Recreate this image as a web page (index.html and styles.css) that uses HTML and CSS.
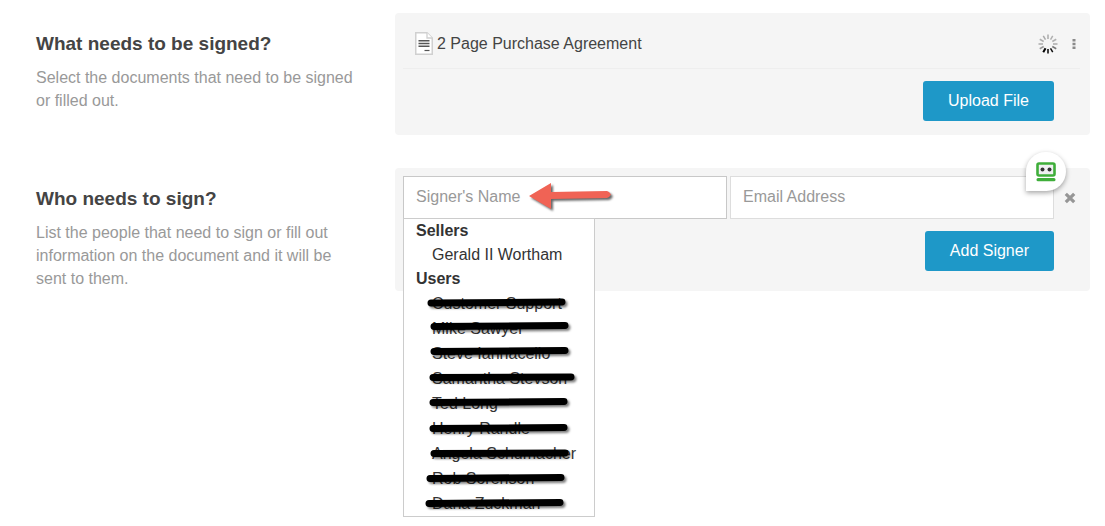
FILE: index.html
```html
<!DOCTYPE html>
<html lang="en">
<head>
    <meta charset="UTF-8">
    <meta name="viewport" content="width=device-width, initial-scale=1.0">
    <title>Request Signatures</title>
    <link rel="stylesheet" href="styles.css">
</head>
<body>
    <form class="signing">
        <section class="step">
            <div class="intro">
                <h2>What needs to be signed?</h2>
                <p>Select the documents that need to be signed or filled out.</p>
            </div>
            <div class="panel">
                <div class="document">
                    <svg class="doc-icon" width="18" height="23" viewBox="0 0 18 23" aria-hidden="true">
                        <path d="M0.75 0.75H12L17.25 6V22.25H0.75Z" fill="#fff" stroke="#d0d0d0" stroke-width="1.5"/>
                        <path d="M12 0.75V6H17.25" fill="#fff" stroke="#d0d0d0" stroke-width="1.3"/>
                        <path d="M3.5 8.8H14.5M3.5 11.5H14.5M3.5 14.2H14.5" stroke="#555" stroke-width="1.4"/>
                        <path d="M9.5 18.5H14.5" stroke="#555" stroke-width="1.2"/>
                    </svg>
                    <span class="doc-name">2 Page Purchase Agreement</span>
                    <svg class="spinner" width="20" height="20" viewBox="-10 -10 20 20" aria-label="Loading">
                        <g stroke-width="1.5">
                            <path d="M0 -5V-9.5" stroke="#aaa"/>
                            <path d="M0 -5V-9.5" stroke="#b0b0b0" transform="rotate(30)"/>
                            <path d="M0 -5V-9.5" stroke="#b0b0b0" transform="rotate(60)"/>
                            <path d="M0 -5V-9.5" stroke="#aaa" transform="rotate(90)"/>
                            <path d="M0 -5V-9.5" stroke="#777" transform="rotate(120)"/>
                            <path d="M0 -5V-9.5" stroke="#111" transform="rotate(150)"/>
                            <path d="M0 -5V-9.5" stroke="#000" transform="rotate(180)"/>
                            <path d="M0 -5V-9.5" stroke="#000" stroke-width="2" transform="rotate(210)"/>
                            <path d="M0 -5V-9.5" stroke="#999" transform="rotate(240)"/>
                            <path d="M0 -5V-9.5" stroke="#aaa" transform="rotate(270)"/>
                            <path d="M0 -5V-9.5" stroke="#b0b0b0" transform="rotate(300)"/>
                            <path d="M0 -5V-9.5" stroke="#aaa" transform="rotate(330)"/>
                        </g>
                    </svg>
                    <button type="button" class="icon-button" aria-label="Document options">
                        <svg width="4" height="12" viewBox="0 0 4 12">
                            <path d="M0.5 1h3v2.4h-3zM0.5 4.8h3v2.4h-3zM0.5 8.6h3V11h-3z" fill="#8a8a8a"/>
                        </svg>
                    </button>
                </div>
                <div class="actions">
                    <button type="button" class="btn">Upload File</button>
                </div>
            </div>
        </section>

        <section class="step">
            <div class="intro">
                <h2>Who needs to sign?</h2>
                <p>List the people that need to sign or fill out information on the document and it will be sent to them.</p>
            </div>
            <div class="panel">
                <div class="signer">
                    <div class="field active">
                        <input type="text" placeholder="Signer's Name" aria-label="Signer's Name">
                        <svg class="arrow" width="90" height="34" viewBox="0 0 90 34" aria-hidden="true">
                            <path d="M3 17L25 4V13L81 12Q83 12 85 15.500Q83 19 81 19L25 20V30Z" fill="#f06355"/>
                        </svg>
                        <div class="suggestions">
                            <h3>Sellers</h3>
                            <ul class="sellers">
                                <li>Gerald II Wortham</li>
                            </ul>
                            <h3>Users</h3>
                            <ul class="users">
                                <li>Customer Support</li>
                                <li>Mike Sawyer</li>
                                <li>Steve Iannacello</li>
                                <li>Samantha Stevson</li>
                                <li>Ted Long</li>
                                <li>Henry Randle</li>
                                <li>Angela Schumacher</li>
                                <li>Rob Sorenson</li>
                                <li>Dana Zuckman</li>
                            </ul>
                            <svg class="marker" width="192" height="300" viewBox="0 0 192 300" aria-hidden="true">
                                <path d="M28 85L159 84M31 108.500L162 107.500M31 133.500L162 132.500M30 159.500L168 159M30 184.500L161 183.500M30 210.500L161 209.500M31 235.500L162 235M27 260.500L158 259.500M26 285.500L157 284.500"/>
                            </svg>
                        </div>
                    </div>
                    <div class="field">
                        <input type="email" placeholder="Email Address" aria-label="Email Address">
                        <button type="button" class="autofill" aria-label="Fill form">
                            <svg width="20" height="20" viewBox="0 0 20 20">
                                <rect x="1.500" y="1.500" width="17" height="12" rx="1.500" fill="#f0f0f2" stroke="#3fae3a" stroke-width="2.600"/>
                                <circle cx="6.500" cy="7.500" r="2" fill="#333"/>
                                <circle cx="13.500" cy="7.500" r="2" fill="#333"/>
                                <rect x="0.500" y="16" width="19" height="3.200" rx="1.500" fill="#3fae3a"/>
                            </svg>
                        </button>
                    </div>
                    <button type="button" class="icon-button remove" aria-label="Remove signer">
                        <svg width="12" height="12" viewBox="0 0 12 12">
                            <path d="M1.800 1.800L10.200 10.200M10.200 1.800L1.800 10.200" stroke="#969696" stroke-width="3.200"/>
                        </svg>
                    </button>
                </div>
                <div class="actions">
                    <button type="button" class="btn">Add Signer</button>
                </div>
            </div>
        </section>
    </form>
</body>
</html>
```

FILE: styles.css
```css
* {
    box-sizing: border-box;
}
body {
    min-height: 100vh;
    margin: 0;
    background-color: #fff;
    color: #444;
    font-family: "Liberation Sans", Arial, sans-serif;
    font-size: 16px;
}
button,
input {
    font: inherit;
}
.signing {
    display: flex;
    flex-direction: column;
    gap: 33px;
    padding: 13px 15px 0 36px;
}
.step {
    display: grid;
    grid-template-columns: 325px 1fr;
    column-gap: 34px;
    align-items: start;
}
.intro {
    padding-top: 19px;
}
.intro h2 {
    margin: 0 0 10px;
    font-size: 19px;
    line-height: 24px;
}
.intro p {
    margin: 0;
    color: #999;
    line-height: 23px;
}
.panel {
    background-color: #f5f5f5;
    border-radius: 4px;
}
.document {
    display: flex;
    align-items: center;
    height: 56px;
    margin: 0 10px 0 8px;
    padding: 6px 0 0 12px;
    border-bottom: 1px solid #eee;
}
.doc-name {
    flex: 1;
    margin-left: 4px;
}
.icon-button {
    display: flex;
    align-items: center;
    justify-content: center;
    width: 32px;
    padding: 0;
    border: none;
    background: none;
    cursor: pointer;
}
.document .icon-button {
    width: 12px;
    margin-left: 10px;
}
.actions {
    display: flex;
    justify-content: flex-end;
    padding: 12px 36px 14px 0;
}
.btn {
    height: 40px;
    padding: 0 25px;
    border: none;
    border-radius: 3px;
    background-color: #1e98c8;
    color: #fff;
    cursor: pointer;
}
.signer {
    display: flex;
    padding: 8px 4px 0 8px;
}
.signer + .actions {
    padding-bottom: 20px;
}
.field {
    position: relative;
    flex: 1;
}
.field + .field {
    margin-left: 3px;
}
.field input {
    display: block;
    width: 100%;
    height: 43px;
    padding: 0 12px 2px;
    border: 1px solid #ddd;
    border-radius: 0;
    background-color: #fff;
}
.field.active input {
    border-color: #c8c8c8;
}
.field input::placeholder {
    color: #999;
    opacity: 1;
}
.arrow {
    position: absolute;
    top: 3px;
    left: 123px;
    filter: drop-shadow(2px 2px 1px rgba(0, 0, 0, 0.6));
    pointer-events: none;
}
.suggestions {
    position: absolute;
    top: 42px;
    left: 0;
    width: 192px;
    border: 1px solid #ccc;
    background-color: #fff;
    color: #333;
}
.suggestions h3 {
    margin: 0;
    padding-left: 12px;
    font-size: 16px;
    line-height: 24px;
}
.suggestions ul {
    margin: 0;
    padding: 0 0 0 28px;
    list-style: none;
    line-height: 24px;
    white-space: nowrap;
}
.suggestions .users {
    line-height: 25px;
}
.marker {
    position: absolute;
    top: -1px;
    left: -1px;
    fill: none;
    stroke: #000;
    stroke-width: 7px;
    stroke-linecap: round;
    filter: drop-shadow(2px 2px 1px rgba(0, 0, 0, 0.5));
    pointer-events: none;
}
.autofill {
    position: absolute;
    top: -24px;
    right: -12px;
    display: flex;
    align-items: center;
    justify-content: center;
    width: 40px;
    height: 39px;
    padding: 0;
    border: none;
    border-radius: 20px 20px 20px 0;
    background-color: #fff;
    box-shadow: 0 2px 5px rgba(0, 0, 0, 0.35);
    cursor: pointer;
}
```
